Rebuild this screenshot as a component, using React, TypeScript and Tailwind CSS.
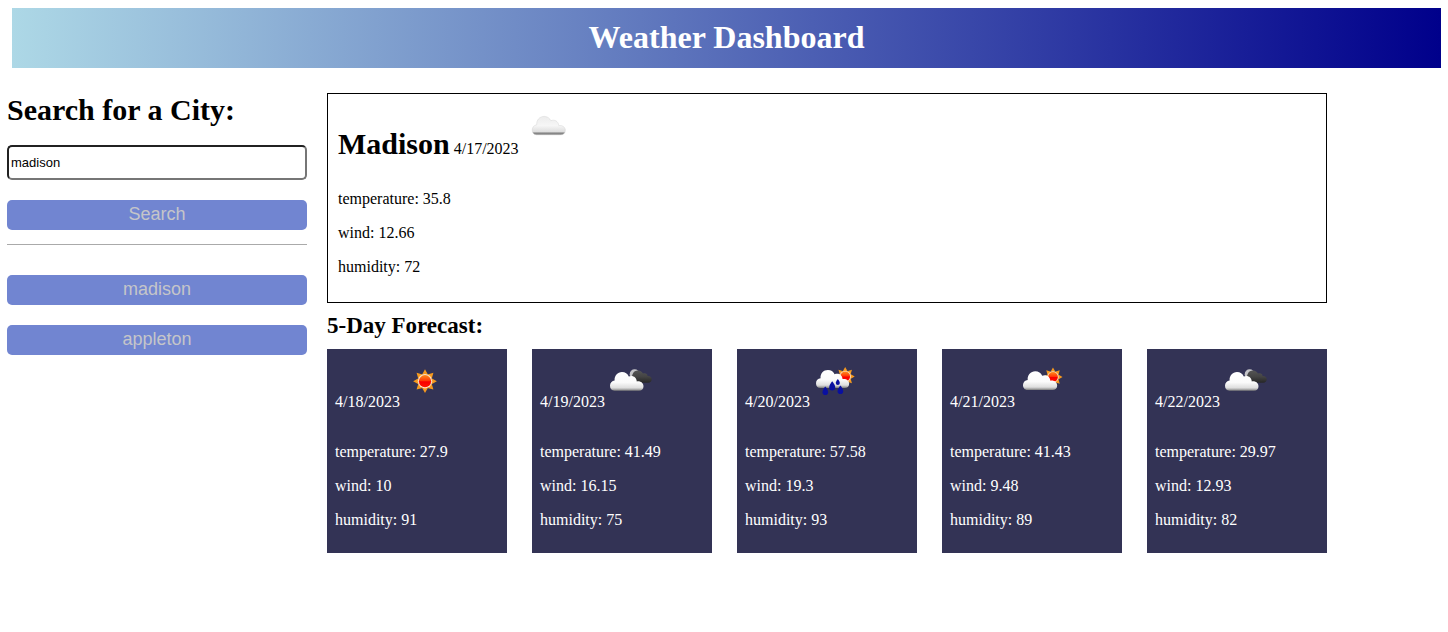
import { useState } from "react";

type Condition = "sun" | "fewClouds" | "cloud" | "brokenClouds" | "rain";

interface Reading {
  date: string;
  condition: Condition;
  temperature: number;
  wind: number;
  humidity: number;
}

const today: Reading = { date: "4/17/2023", condition: "cloud", temperature: 35.8, wind: 12.66, humidity: 72 };

const forecast: Reading[] = [
  { date: "4/18/2023", condition: "sun", temperature: 27.9, wind: 10, humidity: 91 },
  { date: "4/19/2023", condition: "brokenClouds", temperature: 41.49, wind: 16.15, humidity: 75 },
  { date: "4/20/2023", condition: "rain", temperature: 57.58, wind: 19.3, humidity: 93 },
  { date: "4/21/2023", condition: "fewClouds", temperature: 41.43, wind: 9.48, humidity: 89 },
  { date: "4/22/2023", condition: "brokenClouds", temperature: 29.97, wind: 12.93, humidity: 82 },
];

const cloudPath =
  "M4.5 18.8C1.6 18.8 0 16.6 0 13.8C0 11 2 8.8 4.6 8.6C4.2 3.6 7.6 0 12 0C15.2 0 17.6 1.6 18.8 4.4C22.6 2.8 26.6 5 26.8 9.4C30.8 8.8 33.5 11.2 33.5 14.2C33.5 17 31.7 18.8 29 18.8Z";

function Gradients() {
  return (
    <svg width="0" height="0" className="absolute" aria-hidden="true">
      <defs>
        <linearGradient id="cloudFill" x1="0" y1="0" x2="0" y2="1">
          <stop offset="0" stopColor="#fff" />
          <stop offset="0.55" stopColor="#fbfbfb" />
          <stop offset="0.84" stopColor="#dedede" />
          <stop offset="0.93" stopColor="#aaa" />
          <stop offset="1" stopColor="#777" />
        </linearGradient>
        <linearGradient id="grayCloudFill" x1="0" y1="0" x2="0" y2="1">
          <stop offset="0" stopColor="#ececec" />
          <stop offset="0.5" stopColor="#f6f6f6" />
          <stop offset="0.83" stopColor="#dedede" />
          <stop offset="0.9" stopColor="#8c8c8c" />
          <stop offset="1" stopColor="#777" />
        </linearGradient>
        <linearGradient id="darkCloudFill" x1="0" y1="0" x2="0" y2="1">
          <stop offset="0" stopColor="#555" />
          <stop offset="0.5" stopColor="#444" />
          <stop offset="1" stopColor="#262626" />
        </linearGradient>
        <linearGradient id="sunFill" x1="0" y1="0" x2="0" y2="1">
          <stop offset="0" stopColor="#ff8a1c" />
          <stop offset="0.45" stopColor="#ff3a08" />
          <stop offset="0.55" stopColor="#f80000" />
          <stop offset="1" stopColor="#ff1400" />
        </linearGradient>
      </defs>
    </svg>
  );
}

function Sun({ transform }: { transform: string }) {
  return (
    <g transform={transform}>
      {[0, 45, 90, 135, 180, 225, 270, 315].map((angle) => (
        <path key={angle} d="M-3 -6.5L0 -11.9L3 -6.5Z" fill="#f79a1e" transform={`rotate(${angle})`} />
      ))}
      <circle r="7.2" fill="#ffe3c4" />
      <circle r="6.1" fill="url(#sunFill)" />
    </g>
  );
}

function Cloud({ transform, fill = "url(#cloudFill)" }: { transform: string; fill?: string }) {
  return <path d={cloudPath} fill={fill} transform={transform} />;
}

function Drop({ transform }: { transform: string }) {
  return (
    <path d="M0 -4.6C1.4 -3 2.8 -1 2.8 1.2A2.8 2.8 0 0 1 -2.8 1.2C-2.8 -1 -1.4 -3 0 -4.6Z" fill="#0a10a0" transform={transform} />
  );
}

function WeatherIcon({ condition }: { condition: Condition }) {
  return (
    <svg width="50" height="50" viewBox="0 0 50 50" className="shrink-0" aria-hidden="true">
      {condition === "sun" && <Sun transform="translate(25 24.2)" />}
      {condition === "cloud" && (
        <path
          d={cloudPath}
          fill="url(#grayCloudFill)"
          stroke="#cccccc"
          strokeWidth="0.4"
          transform="translate(9.2 12.4) scale(0.99 0.98)"
        />
      )}
      {condition === "brokenClouds" && (
        <>
          <circle cx="29.6" cy="17.2" r="4.9" fill="#c4c4c8" />
          <path
            d="M27 22C26.6 17.5 28.4 13.6 32.6 13.4C35.4 13.3 37.2 14.6 38 16.6C40.6 15.8 42.4 17 42.6 19C45.2 18.8 46.7 20.4 46.7 22.2C46.7 24.4 45.2 25.8 43.2 25.8H30C28 25.8 27.2 24.4 27 22Z"
            fill="url(#darkCloudFill)"
          />
          <Cloud transform="translate(5 15)" />
        </>
      )}
      {condition === "fewClouds" && (
        <>
          <Sun transform="translate(38 20) scale(0.8)" />
          <Cloud transform="translate(8 14.3) scale(1.02 1)" />
        </>
      )}
      {condition === "rain" && (
        <>
          <Sun transform="translate(35.2 19.5) scale(0.8)" />
          <Cloud transform="translate(6 13) scale(0.99 0.96)" />
          <Drop transform="translate(15.3 34)" />
          <Drop transform="translate(22.2 29.3) scale(1.08)" />
          <Drop transform="translate(27.8 25.2) scale(0.72)" />
          <Drop transform="translate(30.4 33)" />
        </>
      )}
    </svg>
  );
}

function Details({ reading }: { reading: Reading }) {
  return (
    <div className="flex flex-col gap-4 pb-4">
      <p>temperature: {reading.temperature}</p>
      <p>wind: {reading.wind}</p>
      <p>humidity: {reading.humidity}</p>
    </div>
  );
}

const buttonClass =
  "h-[30px] w-full rounded-[5px] bg-[#7185d1] pb-[2px] text-center font-['Liberation_Sans',Arial,sans-serif] text-[18px] leading-[28px] text-[#c5c5c9]";

export default function App() {
  const [city, setCity] = useState("madison");

  return (
    <div className="min-h-screen bg-white pt-2 pr-[7px] pl-[7px] font-['Liberation_Serif','Times_New_Roman',serif] text-[16px] leading-[18px] text-black">
      <Gradients />
      <header className="ml-[5px] flex h-[60px] justify-center bg-[linear-gradient(to_right,lightblue,darkblue)] pt-[10px]">
        <h1 className="text-[32px] leading-[38px] font-bold text-white">Weather Dashboard</h1>
      </header>

      <main className="flex gap-5 pt-[25px]">
        <aside className="w-[300px] shrink-0">
          <form onSubmit={(event) => event.preventDefault()}>
            <label htmlFor="city" className="block text-[30px] leading-[34px] font-bold">
              Search for a City:
            </label>
            <input
              id="city"
              type="text"
              value={city}
              onChange={(event) => setCity(event.target.value)}
              className="mt-[18px] block h-[35px] w-full rounded-[5px] border-2 border-[#767676] [border-style:inset] bg-white px-[2px] font-['Liberation_Sans',Arial,sans-serif] text-[13px] outline-none"
            />
            <button type="submit" className={`mt-5 block ${buttonClass}`}>
              Search
            </button>
          </form>
          <hr className="mt-[14px] border-t border-[#aaaaaa]" />
          <div className="mt-[30px] flex flex-col gap-5">
            <button type="button" className={buttonClass}>
              madison
            </button>
            <button type="button" className={buttonClass}>
              appleton
            </button>
          </div>
        </aside>

        <div className="max-w-[1000px] min-w-0 flex-1">
          <section className="border border-black p-[10px]">
            <div className="flex items-baseline pb-[29px]">
              <h2 className="mr-1 text-[30px] leading-[34px] font-bold">Madison</h2>
              <span className="mr-1">{today.date}</span>
              <WeatherIcon condition={today.condition} />
            </div>
            <Details reading={today} />
          </section>

          <h2 className="pt-[10px] pb-[10px] text-[23px] leading-[26px] font-bold">5-Day Forecast:</h2>

          <section className="grid grid-cols-5 gap-[25px]">
            {forecast.map((day) => (
              <article key={day.date} className="bg-[#333355] p-2 text-white">
                <div className="flex items-baseline pb-8">
                  <span>{day.date}</span>
                  <WeatherIcon condition={day.condition} />
                </div>
                <Details reading={day} />
              </article>
            ))}
          </section>
        </div>
      </main>
    </div>
  );
}
